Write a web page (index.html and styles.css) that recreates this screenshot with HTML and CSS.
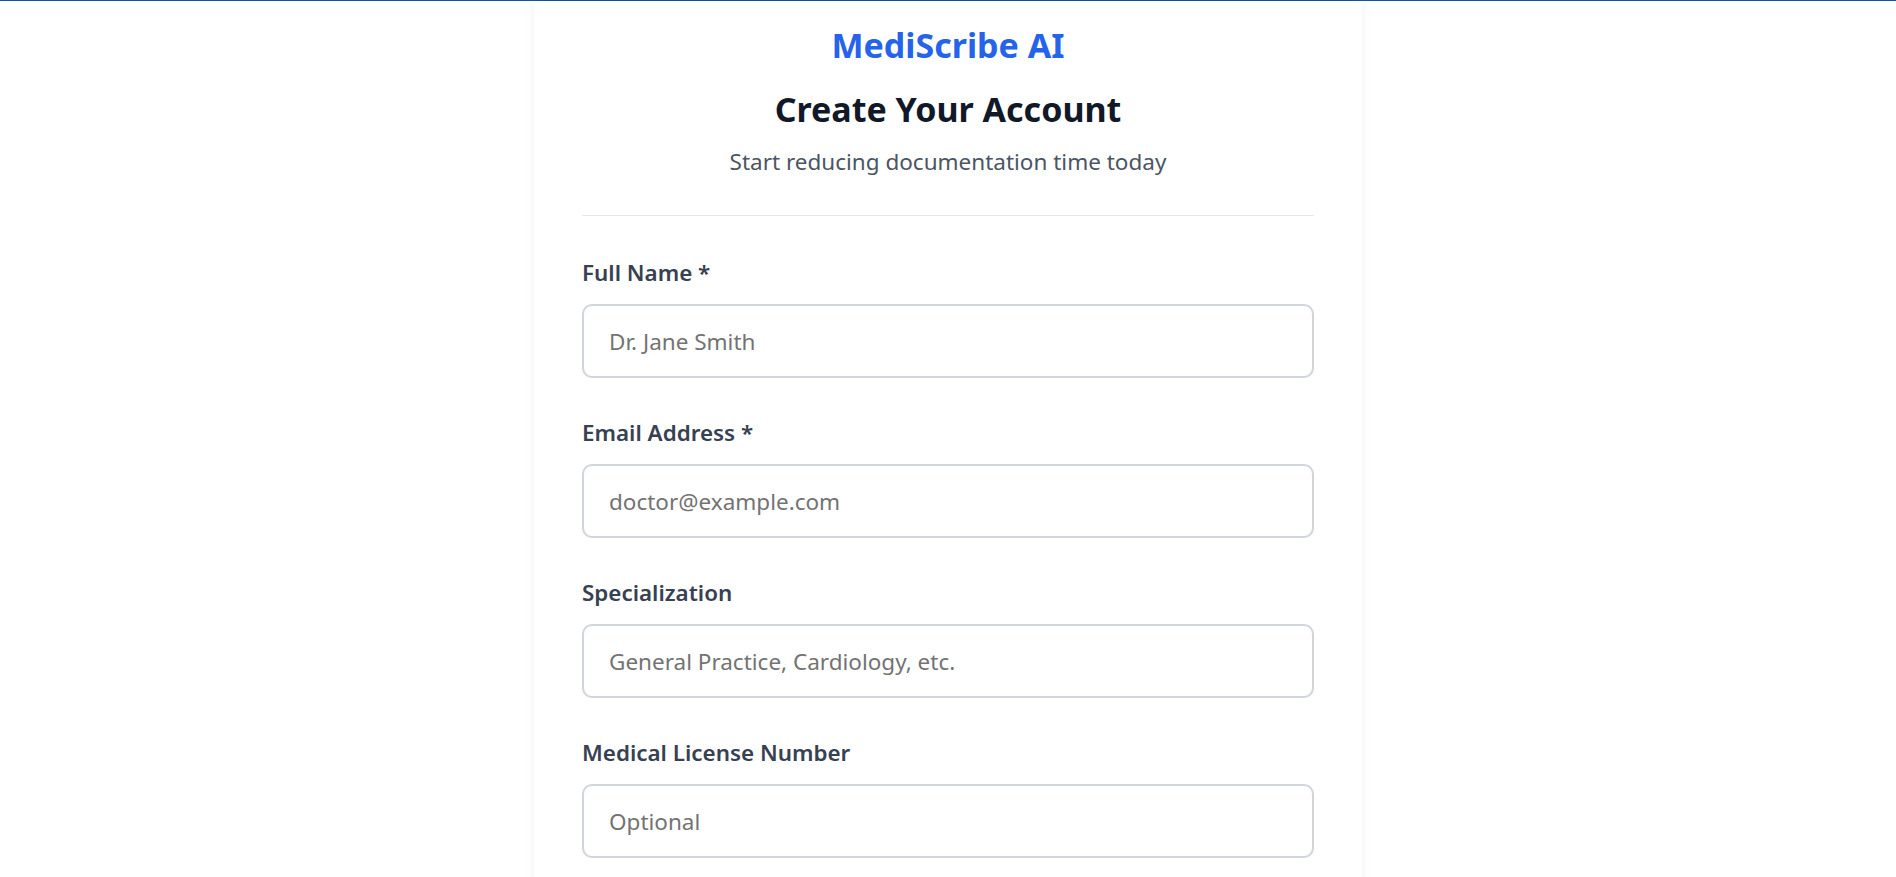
FILE: index.html
```html
<!DOCTYPE html>
<html lang="en">
<head>
<meta charset="utf-8">
<title>MediScribe AI - Create Your Account</title>
<link rel="stylesheet" href="styles.css">
</head>
<body>
<div class="topbar"></div>
<main class="page">
  <section class="card">
    <header class="card-header">
      <div class="brand">MediScribe AI</div>
      <h1 class="title">Create Your Account</h1>
      <p class="subtitle">Start reducing documentation time today</p>
    </header>
    <form class="form">
      <div class="field">
        <label class="label" for="name">Full Name *</label>
        <input class="input" id="name" type="text" placeholder="Dr. Jane Smith">
      </div>
      <div class="field">
        <label class="label" for="email">Email Address *</label>
        <input class="input" id="email" type="email" placeholder="doctor@example.com">
      </div>
      <div class="field">
        <label class="label" for="spec">Specialization</label>
        <input class="input" id="spec" type="text" placeholder="General Practice, Cardiology, etc.">
      </div>
      <div class="field">
        <label class="label" for="license">Medical License Number</label>
        <input class="input" id="license" type="text" placeholder="Optional">
      </div>
    </form>
  </section>
</main>
</body>
</html>
```
FILE: styles.css
```css
* {
  box-sizing: border-box;
}

html, body {
  margin: 0;
  padding: 0;
  background: #ffffff;
}

body {
  font-family: "Noto Sans", "Open Sans", sans-serif;
  color: #111827;
}

.topbar {
  height: 1px;
  background: #0d569e;
}

.page {
  display: flex;
  justify-content: center;
}

.card {
  width: 828px;
  background: #ffffff;
  box-shadow: 0 0 9px rgba(0, 0, 0, 0.06);
  padding: 22px 48px 60px;
}

.card-header {
  text-align: center;
  padding-bottom: 38px;
  border-bottom: 1px solid #e5e7eb;
}

.brand {
  font-size: 34px;
  line-height: 44px;
  font-weight: 700;
  color: #2563eb;
}

.title {
  margin: 22px 0 0;
  font-size: 34px;
  line-height: 40px;
  font-weight: 700;
  color: #111827;
}

.subtitle {
  margin: 18px 0 0;
  font-size: 22.5px;
  line-height: 30px;
  color: #4b5563;
}

.form {
  margin-top: 42px;
  display: flex;
  flex-direction: column;
}

.field {
  display: flex;
  flex-direction: column;
  margin-bottom: 40px;
}

.label {
  font-size: 22.4px;
  line-height: 30px;
  font-weight: 600;
  color: #374151;
  margin-bottom: 16px;
}

.input {
  height: 74px;
  width: 100%;
  border: 2px solid #d1d5db;
  border-radius: 10px;
  padding: 0 25px;
  font-family: inherit;
  font-size: 22.5px;
  color: #111827;
  background: #ffffff;
  outline: none;
}

.input::placeholder {
  color: #737373;
}
```
